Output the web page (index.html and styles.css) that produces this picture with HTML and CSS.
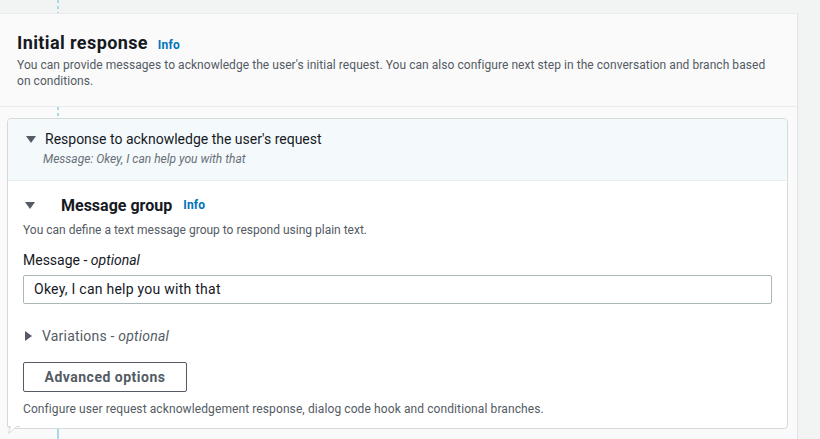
FILE: index.html
```html
<!DOCTYPE html>
<html>
<head>
<meta charset="utf-8">
<link rel="stylesheet" href="styles.css">
</head>
<body>
<div class="page">
  <div class="connector top"></div>
  <section class="panel">
    <header class="panel-head">
      <h2 class="title">Initial response <a class="info">Info</a></h2>
      <p class="desc">You can provide messages to acknowledge the user's initial request. You can also configure next step in the conversation and branch based on conditions.</p>
    </header>
    <div class="panel-body">
      <div class="connector mid"></div>
      <div class="card">
        <div class="card-head">
          <div class="exp-row">
            <span class="caret down"></span>
            <span class="exp-title">Response to acknowledge the user's request</span>
          </div>
          <div class="exp-sub">Message: Okey, I can help you with that</div>
        </div>
        <div class="card-body">
          <div class="group-row">
            <span class="caret down"></span>
            <h3 class="group-title">Message group</h3>
            <a class="info">Info</a>
          </div>
          <p class="hint">You can define a text message group to respond using plain text.</p>
          <label class="label">Message - <i>optional</i></label>
          <div class="input">Okey, I can help you with that</div>
          <div class="var-row">
            <span class="caret right"></span>
            <span class="var-text">Variations - <i>optional</i></span>
          </div>
          <button class="btn">Advanced options</button>
          <p class="hint foot">Configure user request acknowledgement response, dialog code hook and conditional branches.</p>
        </div>
        <svg class="tail" width="14" height="12" viewBox="0 0 14 12"><path d="M0.5 0 L0.5 1.5 L3.5 1.5 L1.5 8.5 L10 1.5 L13 1.5" fill="#fff" stroke="#d5dbdb" stroke-width="1"/></svg>
      </div>
      <div class="connector bottom"></div>
    </div>
  </section>
</div>
</body>
</html>
```
FILE: styles.css
```css
* { box-sizing: border-box; }
html, body { margin: 0; padding: 0; }
body {
  background: #f2f3f3;
  font-family: Roboto, "Noto Sans", sans-serif;
  color: #16191f;
  width: 820px;
  height: 439px;
  overflow: hidden;
}
.connector {
  width: 2px;
  margin-left: 57px;
  background: repeating-linear-gradient(to bottom, #a6dbe8 0 3px, transparent 3px 6px);
}
.connector.top { height: 13px; }
.connector.mid { height: 11px; }
.connector.bottom { height: 12px; background: #a6dbe8; }
.panel {
  width: 798px;
  background: #fafafa;
  border-top: 1px solid #e9ebed;
  border-right: 1px solid #e0e3e5;
}
.panel-head {
  padding: 16px 17px 0;
  border-bottom: 1px solid #eaeded;
  height: 93px;
}
.title {
  margin: 0;
  font-size: 18px;
  font-weight: 700;
  line-height: 26px;
  letter-spacing: 0.4px;
}
.info {
  font-size: 12px;
  font-weight: 700;
  color: #0073bb;
  margin-left: 5px;
  letter-spacing: 0.2px;
}
.desc {
  margin: -1px 0 0;
  font-size: 12px;
  line-height: 16px;
  color: #545b64;
  width: 750px;
  letter-spacing: 0.05px;
}
.panel-body { background: #fafafa; }
.card {
  position: relative;
  margin-left: 7px;
  width: 781px;
  border: 1px solid #d5dbdb;
  border-radius: 4px;
  background: #fff;
}
.card-head {
  background: #f4f9fc;
  border-bottom: 1px solid #eaeded;
  padding: 10px 16px 13px;
  border-radius: 4px 4px 0 0;
}
.exp-row { display: flex; align-items: center; gap: 9px; height: 20px; }
.caret { display: inline-block; width: 0; height: 0; }
.caret.down {
  border-left: 5px solid transparent;
  border-right: 5px solid transparent;
  border-top: 7px solid #545b64;
  margin-left: 2px;
}
.caret.right {
  border-top: 5px solid transparent;
  border-bottom: 5px solid transparent;
  border-left: 7px solid #545b64;
  margin-left: 2px;
}
.exp-title { font-size: 14px; }
.exp-sub {
  font-size: 12px;
  font-style: italic;
  color: #687078;
  margin-left: 19px;
  margin-top: 2px;
  line-height: 16px;
}
.card-body { padding: 14px 15px 11px; }
.group-row { display: flex; align-items: center; height: 20px; }
.group-title {
  margin: 0 0 0 26px;
  font-size: 16px;
  font-weight: 700;
}
.group-row .info { margin-left: 11px; }
.hint {
  margin: 7px 0 0;
  font-size: 12px;
  line-height: 16px;
  color: #545b64;
}
.label {
  display: block;
  margin-top: 12px;
  font-size: 14px;
  line-height: 20px;
}
.input {
  margin-top: 5px;
  height: 29px;
  width: 749px;
  border: 1px solid #aab7b8;
  border-radius: 2px;
  padding: 0 10px;
  font-size: 14px;
  line-height: 27px;
  letter-spacing: 0.25px;
}
.var-row {
  display: flex;
  align-items: center;
  gap: 10px;
  margin-top: 22px;
  height: 20px;
}
.var-text { font-size: 14px; color: #545b64; letter-spacing: 0.2px; }
.btn {
  display: block;
  margin-top: 16px;
  width: 164px;
  height: 30px;
  border: 1px solid #545b64;
  border-radius: 2px;
  background: #fff;
  font-family: inherit;
  font-size: 14px;
  font-weight: 700;
  color: #545b64;
  padding: 0;
  letter-spacing: 0.5px;
}
.hint.foot { margin-top: 9px; font-size: 12px; letter-spacing: 0.1px; }
.tail {
  position: absolute;
  left: -1px;
  bottom: -9px;
}
```
